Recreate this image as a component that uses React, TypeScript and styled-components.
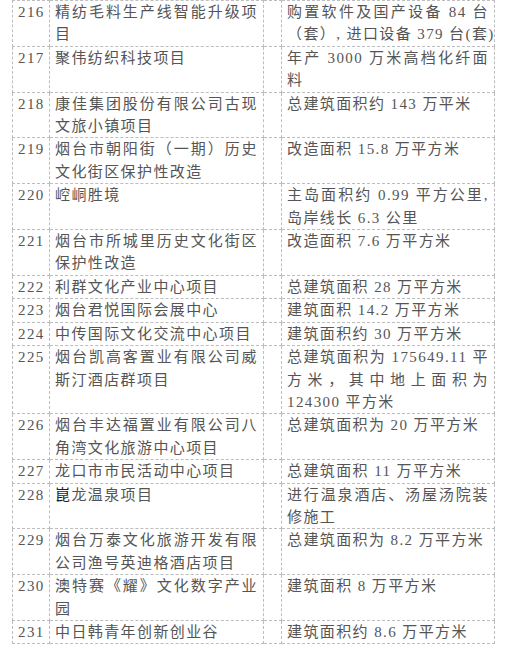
import React from "react";
import styled, { createGlobalStyle } from "styled-components";

const GlobalStyle = createGlobalStyle`
  html, body {
    margin: 0;
    padding: 0;
    background: #ffffff;
  }
`;

const Page = styled.div`
  padding-left: 12px;
  width: 506px;
  box-sizing: border-box;
`;

const Table = styled.table`
  border-collapse: collapse;
  table-layout: fixed;
  width: 482px;
  font-family: "Liberation Serif", "Noto Sans CJK SC", serif;
  font-size: 15px;
  letter-spacing: 1.4px;
  color: #555555;
`;

const Cell = styled.td<{ $w: number }>`
  width: ${({ $w }) => $w}px;
  border: 1px dashed #bdbdbd;
  padding: 0 5px;
  vertical-align: top;
  box-sizing: border-box;
  overflow: hidden;
`;

const Line = styled.span<{ $justify?: boolean }>`
  display: block;
  line-height: 22.4px;
  white-space: ${({ $justify }) => ($justify ? "normal" : "nowrap")};
  text-align: ${({ $justify }) => ($justify ? "justify" : "left")};
  text-align-last: ${({ $justify }) => ($justify ? "justify" : "left")};
`;

const Odd = styled.span`
  color: #1f1f1f;
`;

type Row = {
  no: number;
  name: React.ReactNode[];
  desc: React.ReactNode[];
};

const rows: Row[] = [
  {
    no: 216,
    name: ["精纺毛料生产线智能升级项", "目"],
    desc: ["购置软件及国产设备 84 台", "（套）, 进口设备 379 台(套)"],
  },
  {
    no: 217,
    name: ["聚伟纺织科技项目"],
    desc: ["年产 3000 万米高档化纤面", "料"],
  },
  {
    no: 218,
    name: ["康佳集团股份有限公司古现", "文旅小镇项目"],
    desc: ["总建筑面积约 143 万平米"],
  },
  {
    no: 219,
    name: ["烟台市朝阳街（一期）历史", "文化街区保护性改造"],
    desc: ["改造面积 15.8 万平方米"],
  },
  {
    no: 220,
    name: ["崆峒胜境"],
    desc: ["主岛面积约 0.99 平方公里,", "岛岸线长 6.3 公里"],
  },
  {
    no: 221,
    name: ["烟台市所城里历史文化街区", "保护性改造"],
    desc: ["改造面积 7.6 万平方米"],
  },
  { no: 222, name: ["利群文化产业中心项目"], desc: ["总建筑面积 28 万平方米"] },
  { no: 223, name: ["烟台君悦国际会展中心"], desc: ["建筑面积 14.2 万平方米"] },
  { no: 224, name: ["中传国际文化交流中心项目"], desc: ["建筑面积约 30 万平方米"] },
  {
    no: 225,
    name: ["烟台凯高客置业有限公司威", "斯汀酒店群项目"],
    desc: ["总建筑面积为 175649.11 平", "方米，其中地上面积为", "124300 平方米"],
  },
  {
    no: 226,
    name: ["烟台丰达福置业有限公司八", "角湾文化旅游中心项目"],
    desc: ["总建筑面积为 20 万平方米"],
  },
  { no: 227, name: ["龙口市市民活动中心项目"], desc: ["总建筑面积 11 万平方米"] },
  {
    no: 228,
    name: [
      <>
        <Odd>崑</Odd>龙温泉项目
      </>,
    ],
    desc: ["进行温泉酒店、汤屋汤院装", "修施工"],
  },
  {
    no: 229,
    name: ["烟台万泰文化旅游开发有限", "公司渔号英迪格酒店项目"],
    desc: ["总建筑面积为 8.2 万平方米"],
  },
  {
    no: 230,
    name: ["澳特赛《耀》文化数字产业", "园"],
    desc: ["建筑面积 8 万平方米"],
  },
  { no: 231, name: ["中日韩青年创新创业谷"], desc: ["建筑面积约 8.6 万平方米"] },
];

const Lines: React.FC<{ lines: React.ReactNode[] }> = ({ lines }) => (
  <>
    {lines.map((l, i) => (
      <Line key={i} $justify={i < lines.length - 1}>
        {l}
      </Line>
    ))}
  </>
);

const App: React.FC = () => {
  return (
    <Page>
      <GlobalStyle />
      <Table>
        <tbody>
          {rows.map((r) => (
            <tr key={r.no}>
              <Cell $w={37}>
                <Line>{r.no}</Line>
              </Cell>
              <Cell $w={214}>
                <Lines lines={r.name} />
              </Cell>
              <Cell $w={18} />
              <Cell $w={213}>
                <Lines lines={r.desc} />
              </Cell>
            </tr>
          ))}
        </tbody>
      </Table>
    </Page>
  );
};

export default App;
